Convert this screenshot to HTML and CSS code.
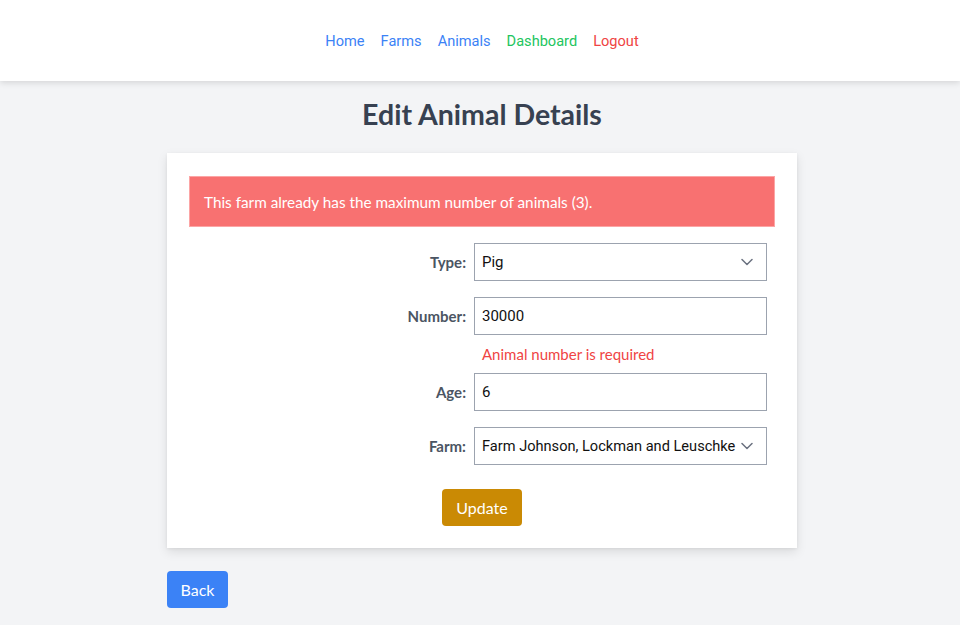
FILE: index.html
```html
<!DOCTYPE html>
<html lang="en">
<head>
<meta charset="utf-8">
<title>Edit Animal Details</title>
<link rel="stylesheet" href="styles.css">
</head>
<body>
<header class="topbar">
  <nav class="nav">
    <a class="nav-link blue" href="#">Home</a>
    <a class="nav-link blue" href="#">Farms</a>
    <a class="nav-link blue" href="#">Animals</a>
    <a class="nav-link green" href="#">Dashboard</a>
    <a class="nav-link red" href="#">Logout</a>
  </nav>
</header>
<main class="main">
  <h1 class="title">Edit Animal Details</h1>
  <section class="card">
    <div class="alert">This farm already has the maximum number of animals (3).</div>
    <form class="form">
      <label class="label" for="type">Type:</label>
      <div class="field">
        <div class="select-wrap">
          <select id="type" class="control select"><option>Pig</option></select>
          <svg class="chev" width="12" height="8" viewBox="0 0 12 8"><path d="M1 1.5l5 5 5-5" fill="none" stroke="#6b7280" stroke-width="1.5" stroke-linecap="round" stroke-linejoin="round"/></svg>
        </div>
      </div>

      <label class="label" for="number">Number:</label>
      <div class="field">
        <input id="number" class="control" value="30000">
        <div class="error">Animal number is required</div>
      </div>

      <label class="label" for="age">Age:</label>
      <div class="field">
        <input id="age" class="control" value="6">
      </div>

      <label class="label" for="farm">Farm:</label>
      <div class="field">
        <div class="select-wrap">
          <select id="farm" class="control select"><option>Farm Johnson, Lockman and Leuschke</option></select>
          <svg class="chev" width="12" height="8" viewBox="0 0 12 8"><path d="M1 1.5l5 5 5-5" fill="none" stroke="#6b7280" stroke-width="1.5" stroke-linecap="round" stroke-linejoin="round"/></svg>
        </div>
      </div>

      <div class="actions">
        <button type="button" class="btn btn-update">Update</button>
      </div>
    </form>
  </section>
  <div class="back-row">
    <a class="btn btn-back" href="#">Back</a>
  </div>
</main>
</body>
</html>
```

FILE: styles.css
```css
* { box-sizing: border-box; }
html, body { margin: 0; padding: 0; }
body {
  background: #f3f4f6;
  font-family: "Lato", "Inter", sans-serif;
  color: #374151;
  height: 625px;
  overflow: hidden;
}
.topbar {
  background: #fff;
  height: 81px;
  display: flex;
  align-items: center;
  justify-content: center;
  box-shadow: 0 2px 6px rgba(0,0,0,0.12);
  position: relative;
  padding-left: 4px;
}
.nav {
  display: flex;
  gap: 16px;
  font-family: "Roboto", sans-serif;
  font-size: 14.6px;
  margin-top: 1px;
}
.nav-link { text-decoration: none; }
.blue { color: #3b82f6; }
.green { color: #22c55e; }
.red { color: #ef4444; }

.main {
  width: 630px;
  margin-left: calc(50% - 313px);
  padding-top: 15px;
}
.title {
  margin: 0 0 21px;
  text-align: center;
  font-size: 28.5px;
  font-weight: 700;
  color: #374151;
  line-height: 36px;
}
.card {
  background: #fff;
  padding: 23px 22px 22px;
  box-shadow: 0 4px 10px rgba(0,0,0,0.10), 0 1px 3px rgba(0,0,0,0.06);
}
.alert {
  background: #f87171;
  border: 1px solid #fca5a5;
  color: #fff;
  font-size: 15.3px;
  padding: 0 14px;
  height: 51px;
  display: flex;
  align-items: center;
}
.form {
  margin-top: 16px;
  display: grid;
  grid-template-columns: 1fr 293px;
  column-gap: 8px;
  padding-right: 8px;
}
.label {
  text-align: right;
  font-size: 15px;
  font-weight: 700;
  color: #4b5563;
  height: 38px;
  line-height: 38px;
}
.field { margin-bottom: 16px; }
.control {
  width: 293px;
  height: 38px;
  border: 1px solid #9ca3af;
  border-radius: 0;
  background: #fff;
  font-family: "Roboto", sans-serif;
  font-size: 15px;
  color: #111;
  padding: 0 7px;
  display: block;
  outline: none;
}
.select-wrap { position: relative; }
.select {
  appearance: none;
  -webkit-appearance: none;
  padding-right: 14px;
}
#farm { font-size: 14.6px; }
.chev {
  position: absolute;
  right: 14px;
  top: 15px;
  pointer-events: none;
}
.error {
  color: #ef4444;
  font-size: 15px;
  padding-left: 8px;
  margin-top: 9px;
  margin-bottom: -7px;
  line-height: 20px;
}
.actions {
  grid-column: 1 / 3;
  display: flex;
  justify-content: center;
  margin-top: 8px;
  padding-left: 8px;
}
.btn {
  display: inline-flex;
  align-items: center;
  justify-content: center;
  height: 37px;
  border: 0;
  border-radius: 4px;
  color: #fff;
  font-family: "Lato", "Inter", sans-serif;
  font-size: 16px;
  text-decoration: none;
  padding: 0 15px;
}
.btn-update { background: #ca8a04; width: 80px; }
.back-row { margin-top: 23px; }
.btn-back { background: #3b82f6; width: 61px; }
```
